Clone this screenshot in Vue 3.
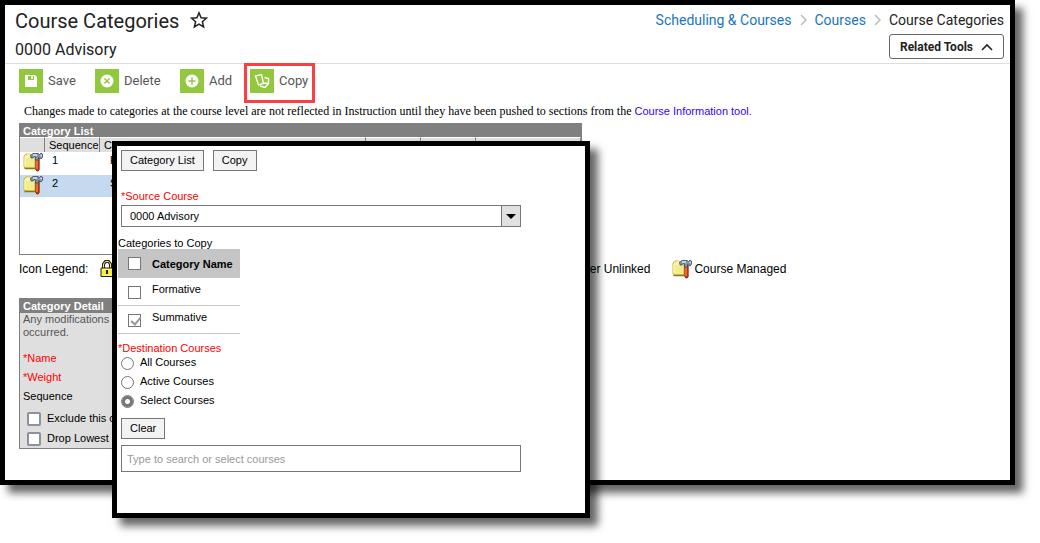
<script setup>
import { ref } from 'vue'

const crumbs = ['Scheduling & Courses', 'Courses']
const rows = [
  { seq: 1, name: 'Formative' },
  { seq: 2, name: 'Summative' },
]
const categories = ref([
  { name: 'Formative', checked: false },
  { name: 'Summative', checked: true },
])
const allChecked = ref(false)
const destinations = ['All Courses', 'Active Courses', 'Select Courses']
const destination = ref('Select Courses')
const source = ref('0000 Advisory')
const search = ref('')
</script>

<template>
  <div class="stage">
    <svg class="defs" aria-hidden="true">
      <symbol id="managed" viewBox="0 0 20 20">
        <path d="M1 4l1-1 1-1h4l1 1h4v12l-1 1H2l-1-1z" fill="#f3ec8c" stroke="#c9b93c" />
        <path d="M2 5h8M2 5v9M4 3h3" stroke="#fffccf" fill="none" />
        <path d="M1.500 16.500h11" stroke="#8a7413" stroke-width="1.500" fill="none" />
        <path d="M12.800 6h3.400v11.500l-1 1.500h-1.400l-1-1.500z" fill="#d03a0c" stroke="#7a1a06" stroke-width=".8" />
        <path d="M14 8v9" stroke="#ff8a50" stroke-width="1.200" />
        <path d="M7.500 3.500L10 1.500h5l1.500 1 1.500-1.500 1.500 1v3.500L18 7l-2-1.500h-.5v2.500h-3V5l-1.500-.5L10 6H8z" fill="#8494aa" stroke="#3c4a60" stroke-width=".8" />
        <path d="M10 3h4M17.500 3.500h1.500" stroke="#dfe9f6" stroke-width="1.400" fill="none" />
      </symbol>
    </svg>

    <main class="frame">
      <header class="head">
        <div class="titles">
          <h1>
            Course Categories
            <svg width="18" height="18" viewBox="0 0 18 18" role="img" aria-label="Favorite">
              <path d="M9 1.800l2.100 4.900 5.300.5-4 3.500 1.200 5.200L9 13.100l-4.600 2.800 1.200-5.200-4-3.500 5.300-.5z" fill="none" stroke="#222" stroke-width="1.500" />
            </svg>
          </h1>
          <h2>0000 Advisory</h2>
        </div>
        <div class="right">
          <nav class="crumbs" aria-label="Breadcrumb">
            <template v-for="c in crumbs" :key="c">
              <a href="#">{{ c }}</a>
              <svg width="7" height="12" viewBox="0 0 7 12"><path d="M1 1l5 5-5 5" fill="none" stroke="#bbb" stroke-width="1.500" /></svg>
            </template>
            <span>Course Categories</span>
          </nav>
          <button class="related" type="button">
            Related Tools
            <svg width="12" height="8" viewBox="0 0 12 8"><path d="M1 7l5-5 5 5" fill="none" stroke="#222" stroke-width="1.600" /></svg>
          </button>
        </div>
      </header>

      <div class="toolbar">
        <button type="button" class="tool save">
          <svg viewBox="0 0 24 24"><path d="M6 6h10l2 2v10H6z" fill="#fff" /><path d="M9 7h6v4H9z" fill="#92c83e" /><path d="M12 7h2v3h-2z" fill="#fff" /></svg>
          <span>Save</span>
        </button>
        <button type="button" class="tool delete">
          <svg viewBox="0 0 24 24"><circle cx="12" cy="12" r="6.500" fill="#fff" /><path d="M9.500 9.500l5 5M14.500 9.500l-5 5" stroke="#92c83e" stroke-width="1.500" /></svg>
          <span>Delete</span>
        </button>
        <button type="button" class="tool add">
          <svg viewBox="0 0 24 24"><circle cx="12" cy="12" r="6.500" fill="#fff" /><path d="M12 8.500v7M8.500 12h7" stroke="#92c83e" stroke-width="1.500" /></svg>
          <span>Add</span>
        </button>
        <button type="button" class="tool copy">
          <svg viewBox="0 0 24 24"><path d="M5.500 7l6-1.500 2 9-5 1.500z" fill="none" stroke="#fff" stroke-width="1.400" /><path d="M14.500 8.500l4 1v5L15 18.500l-5-1.500M18 14.500l-4-.5" fill="none" stroke="#fff" stroke-width="1.400" /></svg>
          <span>Copy</span>
        </button>
      </div>

      <p class="note">
        Changes made to categories at the course level are not reflected in Instruction until they have been pushed to sections from the
        <a href="#">Course Information tool.</a>
      </p>

      <section class="list">
        <h3>Category List</h3>
        <table>
          <colgroup><col class="c-icon" /><col class="c-seq" /><col /><col class="c-small" /><col class="c-small" /><col class="c-last" /></colgroup>
          <thead>
            <tr><th></th><th>Sequence</th><th>Category</th><th></th><th></th><th></th></tr>
          </thead>
          <tbody>
            <tr v-for="r in rows" :key="r.seq" :class="{ selected: r.seq === 2 }">
              <td><svg class="managed"><use href="#managed" /></svg></td>
              <td>{{ r.seq }}</td>
              <td>{{ r.name }}</td>
              <td></td><td></td><td></td>
            </tr>
          </tbody>
        </table>
      </section>

      <div class="legend">
        <span>Icon Legend:</span>
        <svg class="lock" width="14" height="18" viewBox="0 0 14 18">
          <path d="M3.500 9V4l2-2.500h3l2 2.500v5" fill="none" stroke="#222" stroke-width="3" />
          <path d="M3.500 9V4l2-2.500h3l2 2.500v5" fill="none" stroke="#f5ef62" />
          <path d="M1 8h12v8.500H1z" fill="#f7f22d" stroke="#222" />
          <path d="M2 9.500h10M2 15h10" stroke="#fff9a0" />
          <path d="M6 10h2v4H6z" fill="#222" />
        </svg>
        <span class="unlinked">Master Unlinked</span>
        <span class="item"><svg class="managed"><use href="#managed" /></svg>Course Managed</span>
      </div>

      <section class="detail">
        <h3>Category Detail</h3>
        <p>Any modifications<br />occurred.</p>
        <div class="field req">*Name</div>
        <div class="field req">*Weight</div>
        <div class="field">Sequence</div>
        <label class="check"><input type="checkbox" /> Exclude this category</label>
        <label class="check"><input type="checkbox" /> Drop Lowest Score</label>
      </section>
    </main>

    <section class="dialog" role="dialog" aria-label="Copy categories">
      <div class="actions">
        <button class="btn" type="button">Category List</button>
        <button class="btn" type="button">Copy</button>
      </div>

      <label class="source-label" for="source">*Source Course</label>
      <div class="select">
        <select id="source" v-model="source"><option>0000 Advisory</option></select>
        <span class="arrow"><svg width="10" height="5" viewBox="0 0 10 5"><path d="M0 0h10L5 5z" /></svg></span>
      </div>

      <table class="cats">
        <caption>Categories to Copy</caption>
        <thead>
          <tr>
            <th><input v-model="allChecked" type="checkbox" aria-label="All categories" /></th>
            <th>Category Name</th>
          </tr>
        </thead>
        <tbody>
          <tr v-for="(c, i) in categories" :key="c.name">
            <td><input :id="'cat' + i" v-model="c.checked" type="checkbox" /></td>
            <td><label :for="'cat' + i">{{ c.name }}</label></td>
          </tr>
        </tbody>
      </table>

      <fieldset>
        <legend>*Destination Courses</legend>
        <label v-for="d in destinations" :key="d"><input v-model="destination" type="radio" name="destination" :value="d" /><span>{{ d }}</span></label>
      </fieldset>

      <button class="btn clear" type="button">Clear</button>
      <input v-model="search" class="search" type="text" aria-label="Courses" placeholder="Type to search or select courses" />
    </section>
  </div>
</template>

<style>
body {
  margin: 0;
  background: #fff;
}
</style>

<style scoped>
* {
  box-sizing: border-box;
}
.stage {
  position: relative;
  padding: 0 25px 58px 0;
  font: 11px/13px "Liberation Sans", Arial, sans-serif;
  color: #000;
}
.defs {
  position: absolute;
  width: 0;
  height: 0;
}
.frame,
.dialog {
  border: 5px solid #000;
  background: #fff;
  box-shadow: 8px 8px 8px rgba(0, 0, 0, 0.6);
}
.frame {
  padding-bottom: 31px;
}
h1, h2, h3, p {
  margin: 0;
}
button {
  font: inherit;
  color: inherit;
}
.head {
  display: flex;
  justify-content: space-between;
  height: 59px;
  padding: 0 6px 0 10px;
  border-bottom: 1px solid #ddd;
  font-family: Roboto, sans-serif;
  color: #222;
}
h1 {
  display: flex;
  align-items: center;
  gap: 11px;
  font-size: 20px;
  font-weight: 400;
  line-height: 32px;
}
h1 svg {
  margin-bottom: 2px;
}
h2 {
  font-size: 16px;
  font-weight: 400;
  line-height: 25px;
}
.right {
  display: flex;
  flex-direction: column;
  align-items: flex-end;
}
.crumbs {
  display: flex;
  align-items: center;
  gap: 8px;
  padding-top: 1px;
  font-size: 14px;
  line-height: 28px;
}
.crumbs a {
  color: #1a75bb;
  text-decoration: none;
}
.related {
  display: flex;
  align-items: center;
  gap: 8px;
  height: 25px;
  padding: 2px 10px 0;
  border: 1px solid #666;
  border-radius: 3px;
  background: #fff;
  font-size: 12px;
  font-weight: 700;
}
.related svg {
  margin-bottom: 2px;
}
.toolbar {
  display: flex;
  height: 40px;
  padding-left: 14px;
}
.tool {
  display: flex;
  align-items: center;
  gap: 5px;
  height: 24px;
  margin-top: 5px;
  padding: 0;
  border: 0;
  background: none;
  font: 13px/24px Roboto, sans-serif;
  color: #555;
}
.tool svg {
  width: 24px;
  height: 24px;
  background: #92c83e;
}
.save {
  width: 76px;
}
.delete {
  width: 85px;
}
.add {
  width: 64px;
}
.tool.copy {
  align-items: flex-start;
  width: 71px;
  height: 40px;
  margin-top: -1px;
  padding: 3px 0 0 3px;
  border: 3px solid #f94144;
}
.note {
  height: 19px;
  padding-left: 19px;
  font: 12px/14px "Liberation Serif", "Times New Roman", serif;
  white-space: nowrap;
}
.note a {
  font: 11px/14px "Liberation Sans", Arial, sans-serif;
  color: #30f;
  text-decoration: none;
}
h3 {
  height: 14px;
  padding-left: 3px;
  background: #808080;
  color: #fff;
  font-size: 11px;
  line-height: 16px;
}
.list {
  width: 56%;
  height: 132px;
  margin-left: 14px;
  border: 1px solid #808080;
  border-top: 0;
}
.list table {
  width: 100%;
  table-layout: fixed;
  border-spacing: 0;
}
.c-icon {
  width: 25px;
}
.c-seq,
.c-small {
  width: 55px;
}
.c-last {
  width: 105px;
}
.list th {
  height: 15px;
  padding: 1px 0 0 4px;
  border-top: 1px solid #fff;
  border-right: 1px solid #808080;
  background: #dfdfdf;
  font-weight: 400;
  line-height: 13px;
  text-align: left;
}
.list td {
  height: 22px;
  padding: 2px 0 0 10px;
  vertical-align: top;
}
.list td:nth-child(2) {
  padding-left: 7px;
}
.list td:first-child {
  padding: 0 0 0 3px;
}
.selected {
  background: #c5daee;
}
.list tbody tr:first-child td {
  height: 23px;
}
.managed {
  display: block;
  width: 20px;
  height: 20px;
  flex: none;
}
.legend {
  display: flex;
  align-items: center;
  height: 28px;
  padding-left: 14px;
  font-size: 12px;
}
.lock {
  margin-left: 12px;
}
.unlinked {
  width: 100px;
  margin-left: 436px;
  text-align: right;
}
.item {
  display: flex;
  align-items: center;
  gap: 2px;
  margin-left: 22px;
}
.detail {
  width: 56%;
  height: 151px;
  margin: 15px 0 0 14px;
  border: 1px solid #808080;
  background: #dfdfdf;
}
.detail h3 {
  line-height: 14px;
}
.detail p {
  height: 38px;
  padding-left: 3px;
  color: #555;
}
.field {
  height: 19px;
  padding-left: 3px;
  line-height: 15px;
}
.req,
.source-label,
legend {
  color: #f00;
}
.check {
  display: flex;
  align-items: center;
  gap: 6px;
  height: 20px;
  padding: 1px 0 0 7px;
}
input[type='checkbox'],
input[type='radio'] {
  appearance: none;
  flex: none;
  width: 13px;
  height: 13px;
  margin: 0;
  border: 1px solid #767676;
  background: #fff;
}
.check input[type='checkbox'] {
  width: 14px;
  height: 14px;
  border: 2px solid #8f8f9d;
  border-radius: 2px;
}
.dialog {
  position: absolute;
  top: 141px;
  left: 112px;
  width: 478px;
  padding: 4px 64px 41px 1px;
}
.actions {
  display: flex;
  gap: 9px;
  padding-left: 3px;
}
.btn {
  height: 21px;
  padding: 0 8px;
  border: 1px solid #767676;
  background: #f3f3f3;
}
.source-label {
  display: block;
  margin: 19px 0 2px 3px;
}
.select {
  position: relative;
  margin-left: 3px;
}
select {
  display: block;
  width: 100%;
  height: 22px;
  padding: 0 8px;
  appearance: none;
  border: 1px solid #767676;
  border-radius: 0;
  background: #fff;
  font: inherit;
  color: #000;
}
.arrow {
  position: absolute;
  inset: 1px 1px 1px auto;
  display: grid;
  place-items: center;
  width: 19px;
  border-left: 1px solid #767676;
  background: #e1e1e1;
  pointer-events: none;
}
.cats {
  width: 122px;
  margin-top: 10px;
  border-spacing: 0;
}
caption {
  height: 12px;
  text-align: left;
  white-space: nowrap;
}
.cats th {
  height: 29px;
  padding: 1px 0 0;
  background: #c5c5c5;
  text-align: left;
  white-space: nowrap;
}
.cats td {
  height: 28px;
  padding: 5px 0 0;
  border-bottom: 1px solid #c5c5c5;
  vertical-align: top;
}
.cats th:first-child,
.cats td:first-child {
  width: 34px;
  padding-left: 10px;
}
.cats th:first-child {
  padding-top: 0;
}
.cats td:first-child {
  padding-top: 8px;
}
.cats input {
  display: block;
}
.cats input:checked {
  position: relative;
}
.cats input:checked::after {
  content: '';
  position: absolute;
  top: 0;
  left: 4px;
  width: 4px;
  height: 8px;
  border: solid #999;
  border-width: 0 2px 2px 0;
  rotate: 40deg;
}
fieldset {
  margin: 8px 0 0;
  padding: 0;
  border: 0;
}
legend {
  padding: 0;
}
fieldset label {
  display: flex;
  gap: 6px;
  height: 19px;
  margin-left: 3px;
}
fieldset label span {
  padding-top: 1px;
}
fieldset input[type='radio'] {
  margin-top: 2px;
  border-radius: 50%;
}
fieldset input[type='radio']:checked {
  background: radial-gradient(circle, #fff 0 2px, #767676 3px 5px, #fff 6px);
}
.clear {
  display: block;
  margin: 6px 0 6px 3px;
}
.search {
  display: block;
  width: calc(100% - 3px);
  height: 27px;
  margin-left: 3px;
  padding: 0 5px;
  border: 1px solid #767676;
  background: #fff;
  font: inherit;
}
.search::placeholder {
  color: #999;
}
</style>
